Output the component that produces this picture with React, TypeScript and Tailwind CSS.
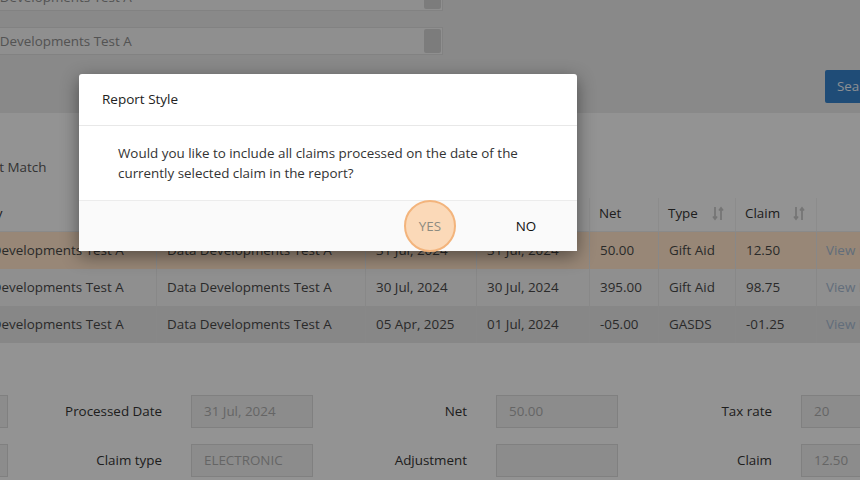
const font = { fontFamily: '"Open Sans", "Noto Sans", sans-serif' };

const rows = [
  { a: "Data Developments Test A", b: "Data Developments Test A", d1: "31 Jul, 2024", d2: "31 Jul, 2024", net: "50.00", type: "Gift Aid", claim: "12.50", active: true },
  { a: "Data Developments Test A", b: "Data Developments Test A", d1: "30 Jul, 2024", d2: "30 Jul, 2024", net: "395.00", type: "Gift Aid", claim: "98.75" },
  { a: "Data Developments Test A", b: "Data Developments Test A", d1: "05 Apr, 2025", d2: "01 Jul, 2024", net: "-05.00", type: "GASDS", claim: "-01.25" },
];

const cols = "grid grid-cols-[208px_209px_111px_113px_69px_77px_81px_120px]";

function SortIcon() {
  return (
    <svg width="12" height="15" viewBox="0 0 12 15" className="text-[#c4c4c4]" fill="none" stroke="currentColor" strokeWidth="1.8">
      <path d="M3 1v12M1 10.5l2 2.5 2-2.5" />
      <path d="M9 14V2M7 4.5L9 2l2 2.5" />
    </svg>
  );
}

function FormField({ label, value }: { label: string; value?: string }) {
  return (
    <div className="flex w-[305px] shrink-0 items-center">
      <span className="w-[154px] shrink-0 text-right text-[13.4px] text-[#333]">{label}</span>
      <div className="ml-[29px] flex h-[33px] w-[122px] shrink-0 items-center border border-[#d6d6d6] bg-[#e9e9e9] px-[12px] text-[13.4px] text-[#a9a9a9]">
        {value}
      </div>
    </div>
  );
}

function FilterInput({ value }: { value: string }) {
  return (
    <div className="flex h-[28px] w-[487px] items-center justify-between border border-[#d9d9d9] bg-[#eeeeee] pl-[10px] pr-[1px]">
      <span className="text-[13.4px] text-[#8a8a8a]">{value}</span>
      <div className="h-[24px] w-[17px] rounded-[2px] bg-[#cfcfcf]" />
    </div>
  );
}

export default function App() {
  return (
    <div className="relative h-[480px] w-[860px] overflow-hidden bg-[#e4e4e4]" style={font}>
      {/* filters */}
      <div className="flex h-[113px] flex-col">
        <div className="ml-[-44px] mt-[-17px] flex flex-col gap-[16px]">
          <FilterInput value="Data Developments Test A" />
          <FilterInput value="Data Developments Test A" />
        </div>
        <div className="mt-[15px] flex justify-end">
          <button className="mr-[-40px] h-[33px] w-[75px] rounded-[2px] bg-[#347fc6] pl-[12px] text-left text-[13.4px] text-[#e8eef5]">
            Search
          </button>
        </div>
      </div>

      {/* results */}
      <div className="h-[367px] bg-[#f5f5f5] pt-[44px]">
        <div className="ml-[-29px] flex h-[20px] items-center text-[13.4px] text-[#555]">Exact Match</div>

        <div className="ml-[-51px] mt-[21px] w-max text-[13.4px]">
          <div className={`${cols} h-[34px] border-b border-[#e6e6e6] text-[#333]`}>
            {["Charity", "Organisation", "Date", "Processed", "Net", "Type", "Claim", ""].map((h, i) => (
              <div key={i} className="flex items-center justify-between border-r border-[#e9e9e9] pb-[3px] pl-[9px] pr-[11px]">
                <span>{h}</span>
                {(h === "Type" || h === "Claim") && <SortIcon />}
              </div>
            ))}
          </div>
          {rows.map((r, i) => (
            <div
              key={i}
              className={`${cols} h-[37px] text-[#474747] ${r.active ? "bg-[#fde2c6]" : i === 1 ? "bg-[#eeeeee]" : "bg-[#e1e1e1]"}`}
            >
              {[r.a, r.b, r.d1, r.d2, r.net, r.type, r.claim].map((c, j) => (
                <div key={j} className="flex items-center whitespace-nowrap border-r border-[#e3e3e3] pb-[1px] pl-[10px] pr-[9px]">
                  {c}
                </div>
              ))}
              <div className="flex items-center whitespace-nowrap pb-[1px] pl-[9px] text-[#a3b6cd]">View Details</div>
            </div>
          ))}
        </div>

        <div className="ml-[-297px] mt-[52px] flex flex-col gap-[16px]">
          <div className="flex">
            <FormField label="Name" value="Data" />
            <FormField label="Processed Date" value="31 Jul, 2024" />
            <FormField label="Net" value="50.00" />
            <FormField label="Tax rate" value="20" />
          </div>
          <div className="flex">
            <FormField label="Reference" value="" />
            <FormField label="Claim type" value="ELECTRONIC" />
            <FormField label="Adjustment" />
            <FormField label="Claim" value="12.50" />
          </div>
        </div>
      </div>

      {/* overlay */}
      <div className="absolute inset-0 bg-black/40" />

      {/* dialog */}
      <div className="absolute left-[79px] top-[74px] w-[498px] rounded-[3px] bg-white shadow-[0_5px_18px_rgba(0,0,0,0.45)]">
        <div className="flex h-[52px] items-center border-b border-[#e8e8e8] pl-[23px] text-[13.5px] text-[#222]">
          Report Style
        </div>
        <div className="py-[17px] pl-[39px] pr-[40px] text-[13.4px] leading-[20px] text-[#333]">
          Would you like to include all claims processed on the date of the currently selected claim in the report?
        </div>
        <div className="flex h-[51px] items-center justify-end gap-[24px] border-t border-[#ececec] bg-[#fafafa] pr-[15px] text-[13.4px]">
          <button className="relative flex h-[51px] w-[72px] items-center justify-center">
            <span className="absolute left-1/2 top-1/2 h-[52px] w-[52px] -translate-x-1/2 -translate-y-1/2 rounded-full border-2 border-[#f3b47c] bg-[#fbd9b8]" />
            <span className="relative text-[#8d8b80]">YES</span>
          </button>
          <button className="flex h-[51px] w-[72px] items-center justify-center text-[#111]">NO</button>
        </div>
      </div>
    </div>
  );
}
